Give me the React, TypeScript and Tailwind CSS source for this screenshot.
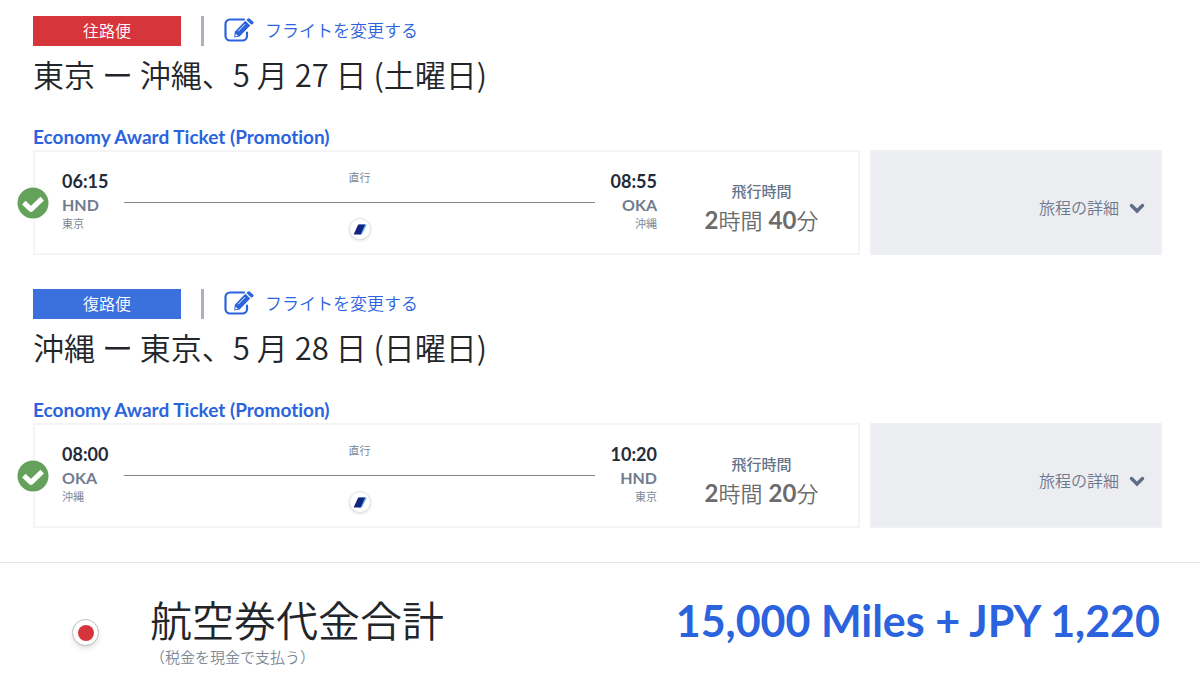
import { clsx } from 'clsx';

interface Stop {
  time: string;
  code: string;
  city: string;
}

interface Flight {
  label: string;
  badge: string;
  title: string;
  from: Stop;
  to: Stop;
  hours: string;
  minutes: string;
}

const flights: Flight[] = [
  {
    label: '往路便',
    badge: 'bg-[#d7353c]',
    title: '東京 ー 沖縄、5 月 27 日 (土曜日)',
    from: { time: '06:15', code: 'HND', city: '東京' },
    to: { time: '08:55', code: 'OKA', city: '沖縄' },
    hours: '2',
    minutes: '40',
  },
  {
    label: '復路便',
    badge: 'bg-[#3b71dc]',
    title: '沖縄 ー 東京、5 月 28 日 (日曜日)',
    from: { time: '08:00', code: 'OKA', city: '沖縄' },
    to: { time: '10:20', code: 'HND', city: '東京' },
    hours: '2',
    minutes: '20',
  },
];

function EditIcon() {
  return (
    <svg viewBox="0 1 30 26" className="w-[30px] h-[26px]" fill="none" aria-hidden="true">
      <path
        d="M20 2.5H6A4.5 4.5 0 0 0 1.5 7v12A4.5 4.5 0 0 0 6 23.500h12.500A4.500 4.500 0 0 0 23 19v-3.500"
        stroke="#2b63de"
        strokeWidth="2.200"
        strokeLinecap="round"
      />
      <path d="M10.800 14.800L21.300 3.800L26.300 8.500L15.600 19.500L10.200 20.600z" fill="#2b63de" />
      <path d="M22.400 2.900L24 1.500Q25 .900 26 1.700L29.200 4.700Q30 5.600 29.200 6.400L27.400 7.700z" fill="#2b63de" />
      <path d="M14.200 14.200L21 7.200" stroke="#fff" strokeWidth="0.900" />
      <path d="M11.700 16.700L13.900 18.800L11.300 19.400z" fill="#fff" />
    </svg>
  );
}

function CheckBadge() {
  return (
    <svg
      viewBox="0 0 34 34"
      className="absolute -left-[19px] top-1/2 -translate-y-1/2 w-[34px] h-[34px]"
      aria-hidden="true"
    >
      <circle cx="17" cy="17" r="17" fill="#fff" />
      <circle cx="17" cy="17" r="15.500" fill="#64a25b" />
      <path
        d="M7.800 16.600L15 23.400L26.200 12.600"
        fill="none"
        stroke="#fff"
        strokeWidth="5"
        strokeLinejoin="round"
      />
    </svg>
  );
}

function AirlineMark() {
  return (
    <span className="flex size-[22px] items-center justify-center rounded-full bg-white border border-[#e4e4e4] shadow-sm">
      <svg viewBox="0 0 14 11" className="w-[14px] h-[11px]" aria-hidden="true">
        <path d="M6 0.500H13.800L8.800 10.500H6z" fill="#58b4ea" />
        <path d="M5.200 0.500H12.200L7.600 10.500H0.600z" fill="#14247e" />
      </svg>
    </span>
  );
}

function StopInfo({ stop, right }: { stop: Stop; right?: boolean }) {
  return (
    <div className={clsx('shrink-0', right && 'text-right')}>
      <p className="text-lg leading-6 font-bold text-[#242b3a]">{stop.time}</p>
      <p className="text-base leading-6 font-bold text-[#717d8d]">{stop.code}</p>
      <p className="text-[11px] leading-[14px] text-[#7d8795]">{stop.city}</p>
    </div>
  );
}

function FlightSection({ flight }: { flight: Flight }) {
  return (
    <section className="mb-[34px]">
      <div className="flex items-center h-[30px]">
        <span className={clsx('w-[148px] h-full text-base leading-[30px] text-center text-white font-[350]', flight.badge)}>
          {flight.label}
        </span>
        <span className="ml-5 w-[3px] h-full bg-[#a9b1bf]" />
        <a href="#change" className="ml-5 flex items-center gap-[11px] text-[17px] leading-7 text-[#2b63de] font-[350]">
          <EditIcon />
          フライトを変更する
        </a>
      </div>
      <h2 className="mt-2 text-[31px] leading-10 font-[350] text-[#22262b] font-['Noto_Sans_CJK_JP',sans-serif]">
        {flight.title}
      </h2>
      <h3 className="mt-[31px] text-[19px] leading-6 font-bold text-[#2b63de] [font-variant-ligatures:none]">
        Economy Award Ticket (Promotion)
      </h3>

      <div className="mt-px flex gap-[10px]">
        <div className="relative flex-1 flex border-2 border-[#f4f4f5] pt-[17px] pb-[13px] pl-[27px]">
          <CheckBadge />
          <StopInfo stop={flight.from} />
          <div className="flex-1 mx-4 flex flex-col items-center">
            <span className="text-[11px] leading-[18px] text-[#7d8795]">直行</span>
            <span className="mt-[15px] w-full h-px bg-[#858585]" />
            <span className="mt-[15px]">
              <AirlineMark />
            </span>
          </div>
          <StopInfo stop={flight.to} right />
          <div className="w-[201px] pt-[10px] pl-2 text-center">
            <p className="text-[15px] leading-6 font-medium text-[#667489]">飛行時間</p>
            <p className="mt-[3px] text-[22px] leading-7 font-[350] text-[#6c6c6c]">
              <b className="font-bold text-2xl leading-7">{flight.hours}</b>時間{' '}
              <b className="font-bold text-2xl leading-7">{flight.minutes}</b>分
            </p>
          </div>
        </div>
        <button
          type="button"
          className="w-[292px] flex items-center justify-end gap-[10px] pr-[15px] pt-[10px] bg-[#ebedf1] border-2 border-[#eff0f3] text-base font-[350] text-[#6b7890]"
        >
          旅程の詳細
          <svg viewBox="0 0 16 12" className="w-4 h-3" fill="none" aria-hidden="true">
            <path d="M2.500 3.500L8 9L13.500 3.500" stroke="#5f6d84" strokeWidth="3.400" strokeLinecap="round" />
          </svg>
        </button>
      </div>
    </section>
  );
}

export default function App() {
  return (
    <div className="bg-white font-[Lato,'Noto_Sans_CJK_JP',sans-serif]" lang="ja">
      <main className="pt-4 pl-[33px] pr-[38px]">
        {flights.map((flight) => (
          <FlightSection key={flight.label} flight={flight} />
        ))}
      </main>

      <footer className="flex items-start border-t border-[#e4e4e4] pt-[33px] pb-3 pl-[72px] pr-10">
        <span className="mt-[23px] flex size-[27px] items-center justify-center rounded-full bg-white border border-[#bdbdbd] shadow-md">
          <span className="size-4 rounded-full bg-[#d7353c]" />
        </span>
        <div className="ml-[51px]">
          <h2 className="text-[42px] leading-[50px] font-[350] text-[#22262b]">航空券代金合計</h2>
          <p className="mt-px text-[15px] leading-5 text-[#7d8795] font-[350]">（税金を現金で支払う）</p>
        </div>
        <p className="ml-auto text-[43px] leading-[50px] font-bold text-[#2b63de]">15,000 Miles + JPY 1,220</p>
      </footer>
    </div>
  );
}
